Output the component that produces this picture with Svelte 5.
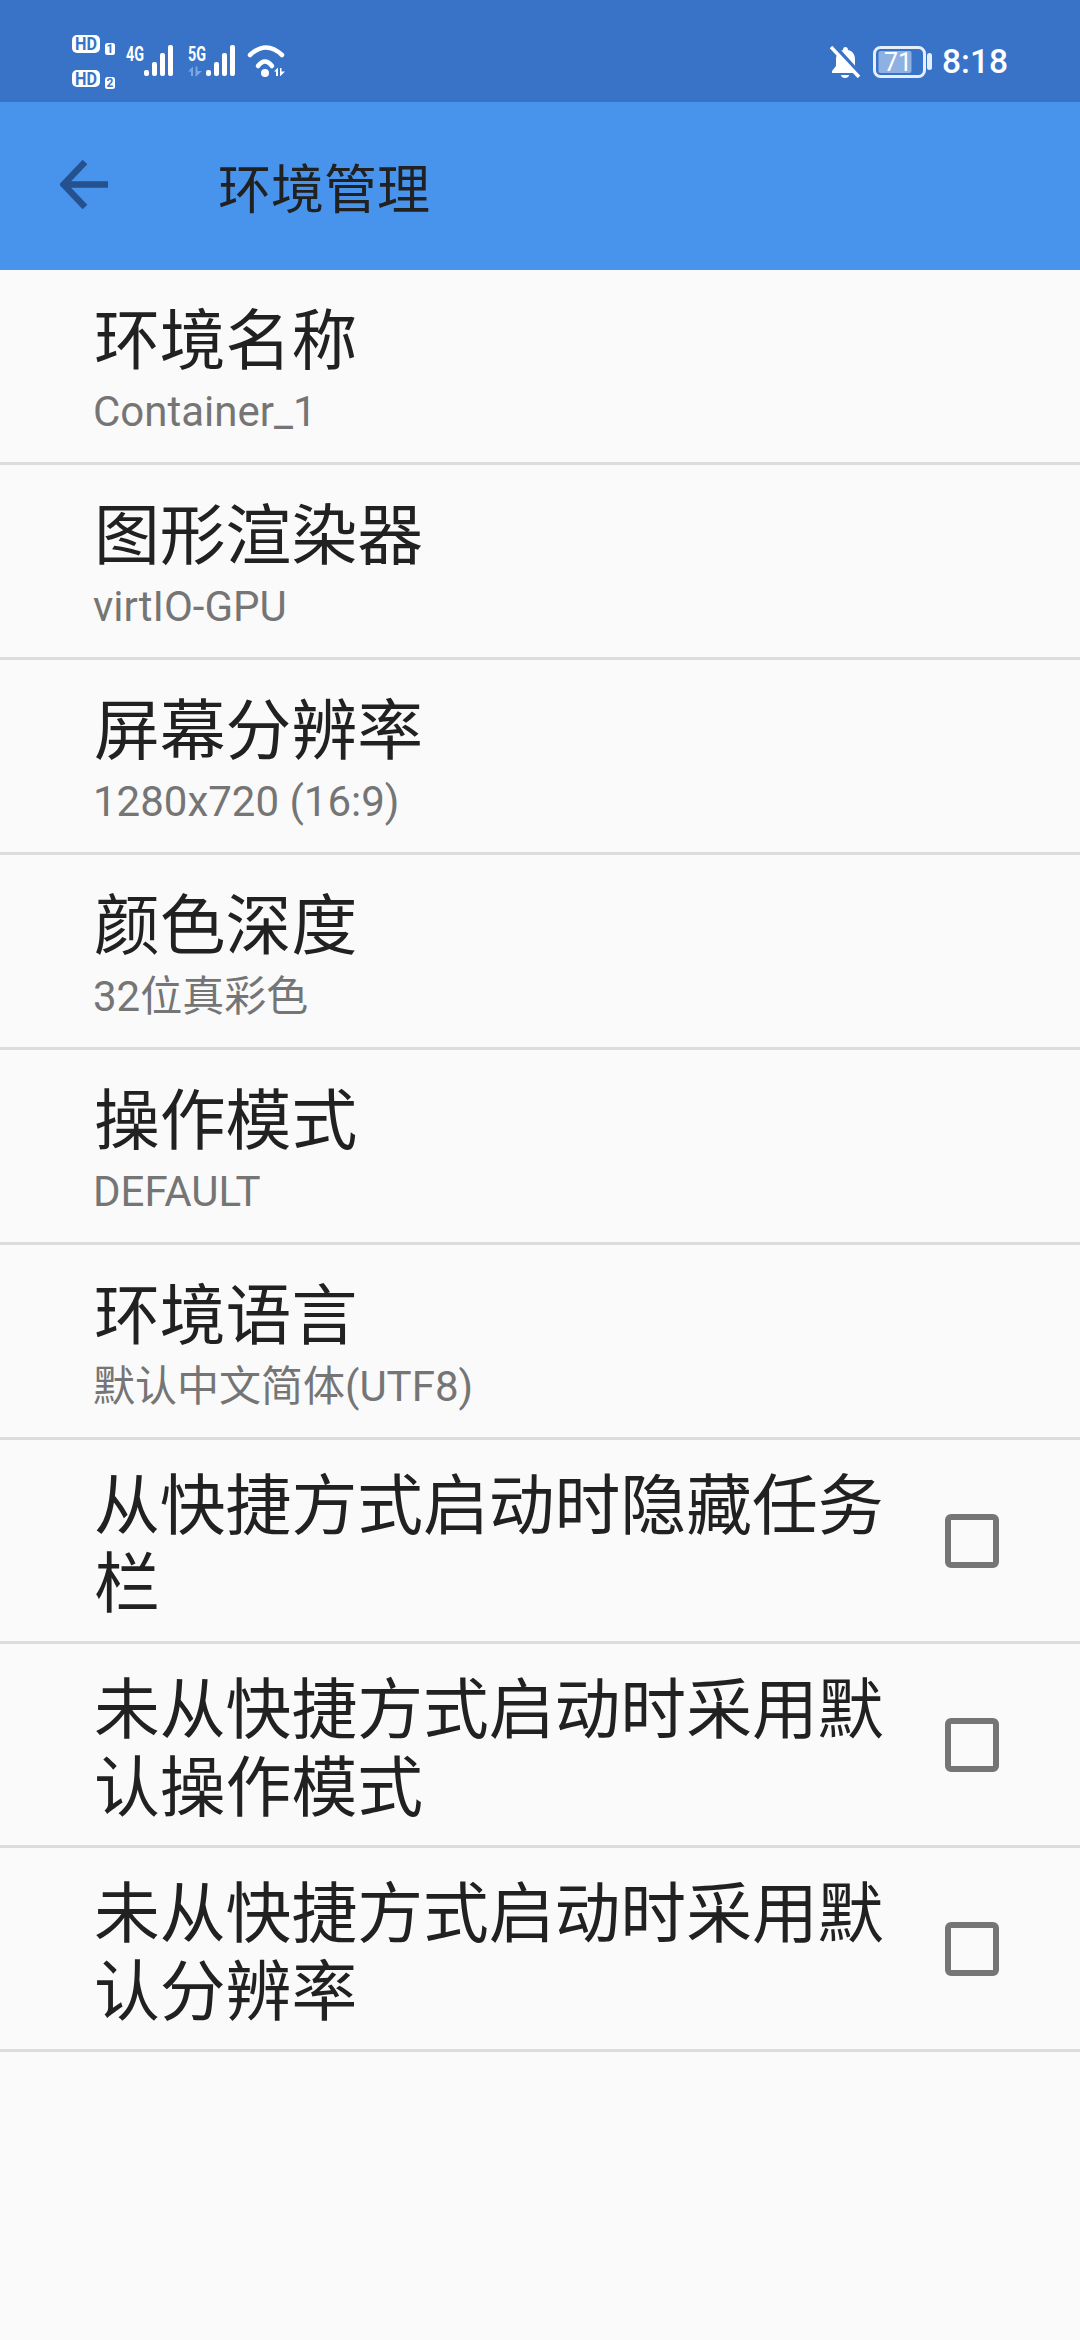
<script>
	const plainRows = [
		{ title: '环境名称', value: 'Container_1' },
		{ title: '图形渲染器', value: 'virtIO-GPU' },
		{ title: '屏幕分辨率', value: '1280x720 (16:9)' },
		{ title: '颜色深度', value: '32位真彩色' },
		{ title: '操作模式', value: 'DEFAULT' },
		{ title: '环境语言', value: '默认中文简体(UTF8)' }
	];
	const checkRows = ['从快捷方式启动时隐藏任务栏', '未从快捷方式启动时采用默认操作模式', '未从快捷方式启动时采用默认分辨率'];
	const bars = [
		{ x: 0, h: 6 },
		{ x: 8, h: 14 },
		{ x: 16, h: 23 },
		{ x: 24, h: 31 }
	];
</script>

<div class="page">
	<header class="status">
		<svg class="status-left" width="216" height="58" viewBox="0 0 216 58">
			<!-- sim slots -->
			<rect x="1" y="2" width="28" height="18" rx="5" fill="#fff" />
			<text x="15" y="17" text-anchor="middle" textLength="22" lengthAdjust="spacingAndGlyphs" class="hd">HD</text>
			<rect x="34" y="10" width="10" height="12" rx="2.5" fill="#fff" />
			<text x="39" y="20" text-anchor="middle" class="num">1</text>
			<rect x="1" y="37" width="28" height="17" rx="5" fill="#fff" />
			<text x="15" y="51.5" text-anchor="middle" textLength="22" lengthAdjust="spacingAndGlyphs" class="hd">HD</text>
			<rect x="34" y="44" width="10" height="12" rx="2.5" fill="#fff" />
			<text x="39" y="54" text-anchor="middle" class="num">2</text>

			<text x="55" y="28" textLength="18" lengthAdjust="spacingAndGlyphs" class="net">4G</text>
			<g transform="translate(73 12)" fill="#fff">
				{#each bars as b}
					<rect x={b.x} y={31 - b.h} width="5" height={b.h} rx="2" />
				{/each}
			</g>
			<text x="117" y="28" textLength="18" lengthAdjust="spacingAndGlyphs" class="net">5G</text>
			<path d="M117 38.5 L122 33.5 V43 H120 V38.5 Z M124.5 33.5 H126.5 V38 H131 L125 43.5 H124.5 Z" fill="#7fa5de" />
			<g transform="translate(135 12)" fill="#fff">
				{#each bars as b}
					<rect x={b.x} y={31 - b.h} width="5" height={b.h} rx="2" />
				{/each}
			</g>
			<!-- wifi -->
			<g fill="none" stroke="#fff" stroke-width="4.5" stroke-linecap="round">
				<path d="M179 22 Q195 7 211 22" />
				<path d="M187 33 Q194 24 201 33" />
			</g>
			<circle cx="194" cy="40" r="4" fill="#fff" />
			<path d="M203 38.5 L207 34.5 V43 H205 V38.5 Z M209 35 H210.5 V38.5 H214 L209.5 43 H209 Z" fill="#fff" />
		</svg>
		<div class="status-right">
			<svg class="bell" width="31" height="32" viewBox="0 0 31 32">
				<path d="M15 1c2 0 3 1 3 3 5 1 7 5 7 9v7l4 5v2H2v-2l4-5v-7c0-4 3-8 7-9 0-2 1-3 2-3z" fill="#fff" />
				<path d="M11 29h8c0 2-2 3-4 3s-4-1-4-3z" fill="#fff" />
				<path d="M3 -1l27 30" stroke="#3873c8" stroke-width="5" />
				<path d="M1 1l28 30" stroke="#fff" stroke-width="3.5" />
			</svg>
			<svg class="battery" width="60" height="32" viewBox="0 0 60 32">
				<rect x="1.5" y="1.5" width="50" height="29" rx="6" fill="none" stroke="#e6eef9" stroke-width="3" />
				<rect x="5.5" y="5" width="33" height="22" rx="2" fill="#8fb0e2" />
				<rect x="54" y="7" width="5" height="17" rx="2.5" fill="#e6eef9" />
				<text x="25" y="25" text-anchor="middle" class="level">71</text>
			</svg>
			<span class="time">8:18</span>
		</div>
	</header>

	<nav class="toolbar">
		<svg class="back" width="50" height="50" viewBox="0 0 50 50">
			<path d="M25 2 L3.5 24.5 L25 47 M3.5 24.5 H48" fill="none" stroke="#25528f" stroke-width="6.5" />
		</svg>
		<h1>环境管理</h1>
	</nav>

	<main>
		{#each plainRows as row}
			<div class="row">
				<div class="title">{row.title}</div>
				<div class="value">{row.value}</div>
			</div>
		{/each}
		{#each checkRows as title}
			<div class="row check-row">
				<div class="title wrap">{title}</div>
				<span class="box"></span>
			</div>
		{/each}
	</main>
</div>

<style>
	:global(body) {
		margin: 0;
		background: #fafafa;
	}
	.page {
		width: 1080px;
		height: 2340px;
		overflow: hidden;
		background: #fafafa;
		font-family: Roboto, 'Noto Sans CJK SC', sans-serif;
	}
	.status {
		height: 102px;
		background: #3873c8;
		display: flex;
		align-items: flex-start;
		justify-content: space-between;
		padding: 33px 72px 0 71px;
		box-sizing: border-box;
	}
	.status-right {
		display: flex;
		align-items: center;
		margin-top: 8px;
		color: #fff;
	}
	.status-left text {
		font-family: Roboto, sans-serif;
		fill: #fff;
	}
	.status-left .hd {
		font-size: 18px;
		font-weight: 700;
		fill: #3873c8;
	}
	.status-left .num {
		font-size: 12px;
		font-weight: 700;
		fill: #3873c8;
	}
	.status-left .net {
		font-size: 20px;
		font-weight: 700;
	}
	.bell {
		margin-right: 12px;
	}
	.battery {
		margin-right: 9px;
	}
	.level {
		font-family: Roboto, sans-serif;
		font-size: 25px;
		fill: #fff;
	}
	.time {
		font-size: 33.5px;
		font-weight: 500;
		line-height: 41px;
	}
	.toolbar {
		height: 168px;
		background: #4893ec;
		display: flex;
		align-items: center;
		padding-left: 60px;
		box-sizing: border-box;
	}
	.back {
		margin-top: -2px;
	}
	h1 {
		margin: 10px 0 0 108px;
		font-size: 53px;
		font-weight: 400;
		color: #212121;
		line-height: 72px;
	}
	.row {
		box-sizing: border-box;
		height: 195px;
		border-bottom: 3px solid #dcdcdc;
		padding: 34px 40px 0 94px;
	}
	.title {
		font-size: 65.8px;
		line-height: 76px;
		color: #212121;
	}
	.value {
		font-size: 42px;
		line-height: 50px;
		margin: 7px 0 0 -1px;
		color: #757575;
	}
	.check-row {
		height: 204px;
		display: flex;
		align-items: center;
		justify-content: space-between;
		padding: 0 81px 0 94px;
	}
	.wrap {
		width: 800px;
		line-height: 78px;
		margin-top: 10px;
	}
	.box {
		width: 54px;
		height: 54px;
		box-sizing: border-box;
		border: 6px solid #757575;
		border-radius: 6px;
		flex: none;
	}
</style>
